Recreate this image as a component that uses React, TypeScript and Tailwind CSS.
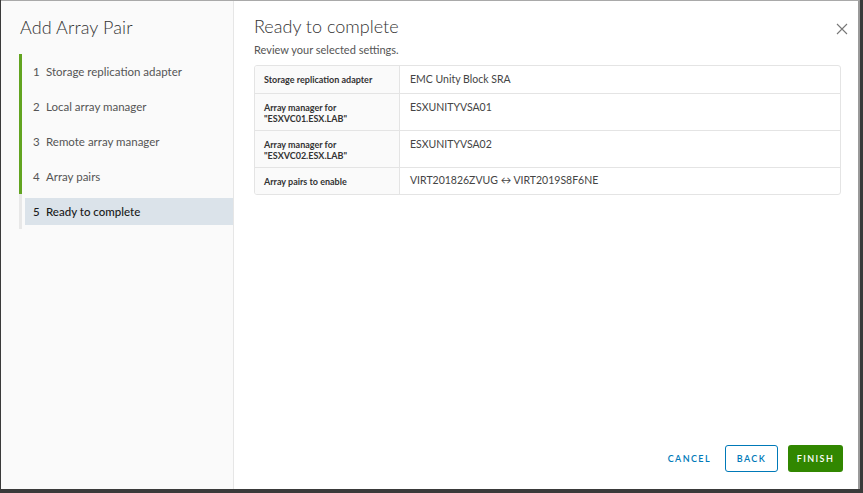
import React from "react";

const steps = [
  "Storage replication adapter",
  "Local array manager",
  "Remote array manager",
  "Array pairs",
  "Ready to complete",
];

const rows: { label: React.ReactNode; value: string; tall?: boolean }[] = [
  { label: "Storage replication adapter", value: "EMC Unity Block SRA" },
  { label: <>Array manager for<br />"ESXVC01.ESX.LAB"</>, value: "ESXUNITYVSA01", tall: true },
  { label: <>Array manager for<br />"ESXVC02.ESX.LAB"</>, value: "ESXUNITYVSA02", tall: true },
  { label: "Array pairs to enable", value: "VIRT201826ZVUG \u2194 VIRT2019S8F6NE" },
];

export default function App() {
  return (
    <div
      className="w-[863px] h-[493px] bg-[#3a3a3a] flex flex-col overflow-hidden"
      style={{ fontFamily: "Lato, 'Open Sans', sans-serif" }}
    >
      <div className="h-[489px] w-[859px] ml-[1px] border-t border-[#a9a9a9] border-r-2 border-r-[#9a9a9a] flex bg-white">
        {/* Sidebar */}
        <div className="w-[233px] shrink-0 bg-[#fafafa] border-r border-[#e6e6e6] flex flex-col">
          <div className="pl-[19px] pt-[15px] text-[18px] leading-[22px] text-[#333] font-light tracking-[0.1px]">
            Add Array Pair
          </div>
          <div className="mt-[16px] ml-[18px] flex flex-col">
            {steps.map((s, i) => {
              const active = i === 4;
              return (
                <div key={s} className="flex h-[35px] items-stretch">
                  <div className={`w-[3px] shrink-0 ${active ? "bg-[#e8e8e8]" : "bg-[#62a420]"}`} />
                  <div className="flex-1 flex items-center pl-[3px]">
                    <div
                      className={`flex-1 h-[27px] flex items-center pl-[8px] text-[11.5px] ${
                        active ? "bg-[#dbe3ea] text-[#1a1a1a] font-medium" : "text-[#555]"
                      }`}
                    >
                      <span className="w-[13px]">{i + 1}</span>
                      <span>{s}</span>
                    </div>
                  </div>
                </div>
              );
            })}
          </div>
        </div>

        {/* Main */}
        <div className="flex-1 flex flex-col pl-[20px] pr-[15px]">
          <div className="flex items-start justify-between pt-[14px]">
            <div className="text-[18px] leading-[22px] text-[#333] font-light">Ready to complete</div>
            <svg width="12" height="12" viewBox="0 0 12 12" className="mt-[8px] mr-[-5px]">
              <path d="M1 1 L11 11 M11 1 L1 11" stroke="#777" strokeWidth="1.1" />
            </svg>
          </div>
          <div className="mt-[6px] text-[11px] leading-[14px] text-[#555]">Review your selected settings.</div>
          <div className="mt-[8px] mr-[2px] border border-[#e4e4e4] rounded-[3px] overflow-hidden">
            {rows.map((r, i) => (
              <div
                key={i}
                className={`flex ${r.tall ? "h-[37px]" : "h-[27px]"} ${i > 0 ? "border-t border-[#e4e4e4]" : ""}`}
              >
                <div
                  className={`w-[145px] shrink-0 bg-[#fafafa] border-r border-[#e4e4e4] pl-[9px] text-[9px] leading-[11px] font-bold text-[#333] ${
                    r.tall ? "pt-[8px]" : "flex items-center"
                  }`}
                >
                  <div>{r.label}</div>
                </div>
                <div
                  className={`pl-[10px] text-[10.5px] text-[#444] ${r.tall ? "pt-[6px]" : "flex items-center"}`}
                >
                  {r.value}
                </div>
              </div>
            ))}
          </div>
          <div className="flex-1" />
          <div className="flex items-center justify-end gap-[10px] pb-[17px]">
            <button className="h-[27px] px-[4px] text-[9px] tracking-[1.4px] text-[#0079b8] font-semibold">
              CANCEL
            </button>
            <button className="h-[27px] w-[53px] border border-[#0079b8] rounded-[3px] text-[9px] tracking-[1.4px] text-[#0079b8] font-semibold">
              BACK
            </button>
            <button className="h-[27px] w-[55px] bg-[#318700] rounded-[3px] text-[9px] tracking-[1.4px] text-white font-semibold">
              FINISH
            </button>
          </div>
        </div>
      </div>
    </div>
  );
}
